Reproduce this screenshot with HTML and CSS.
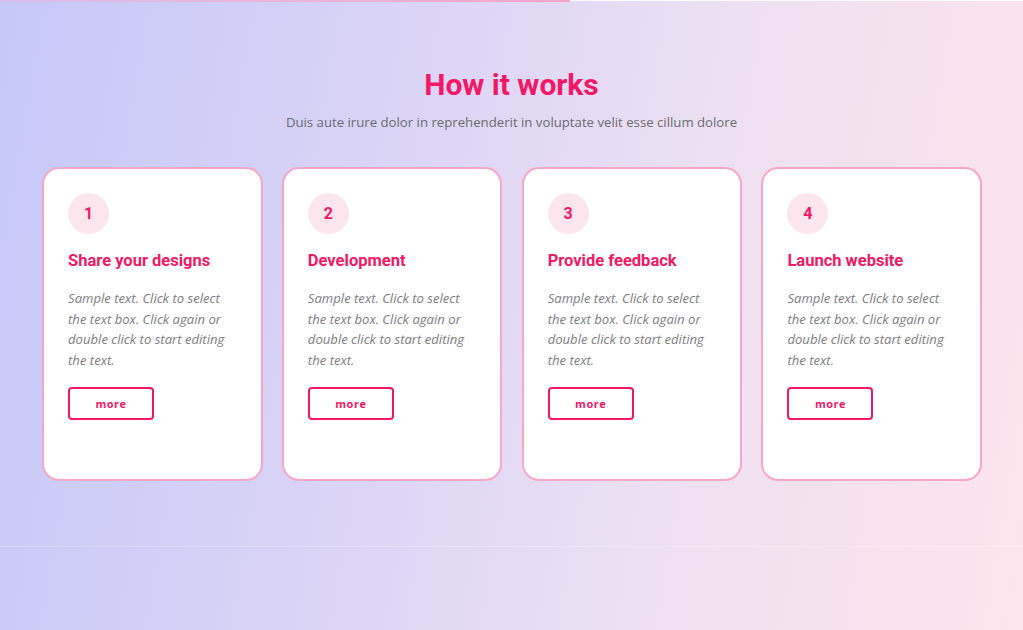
FILE: index.html
```html
<!DOCTYPE html>
<html>
<head>
<meta charset="utf-8">
<link rel="stylesheet" href="styles.css">
</head>
<body>
<div class="progress"><div class="progress-fill"></div></div>
<section class="steps">
  <h1 class="title">How it works</h1>
  <p class="subtitle">Duis aute irure dolor in reprehenderit in voluptate velit esse cillum dolore</p>
  <div class="cards">
    <div class="card">
      <div class="num">1</div>
      <h3 class="card-title">Share your designs</h3>
      <p class="card-text">Sample text. Click to select the text box. Click again or double click to start editing the text.</p>
      <a class="btn">more</a>
    </div>
    <div class="card">
      <div class="num">2</div>
      <h3 class="card-title">Development</h3>
      <p class="card-text">Sample text. Click to select the text box. Click again or double click to start editing the text.</p>
      <a class="btn">more</a>
    </div>
    <div class="card">
      <div class="num">3</div>
      <h3 class="card-title">Provide feedback</h3>
      <p class="card-text">Sample text. Click to select the text box. Click again or double click to start editing the text.</p>
      <a class="btn">more</a>
    </div>
    <div class="card">
      <div class="num">4</div>
      <h3 class="card-title">Launch website</h3>
      <p class="card-text">Sample text. Click to select the text box. Click again or double click to start editing the text.</p>
      <a class="btn">more</a>
    </div>
  </div>
</section>
</body>
</html>
```
FILE: styles.css
```css
html, body {
  margin: 0;
  padding: 0;
}
body {
  width: 1023px;
  height: 630px;
  overflow: hidden;
  background: linear-gradient(100deg, #c5c8f9 0%, #dcd5f5 40%, #ede0f2 65%, #fee4ec 100%);
  font-family: "Open Sans", sans-serif;
}
.progress {
  height: 2px;
  display: flex;
}
.progress-fill {
  width: 570px;
  height: 2px;
  background: linear-gradient(90deg, rgba(249,168,212,0.35), #f7a3c9);
}
.progress::after {
  content: "";
  flex: 1;
  height: 1px;
  background: rgba(255,255,255,0.9);
}
.steps {
  height: 545px;
  border-bottom: 1px solid rgba(255,255,255,0.25);
  display: flex;
  flex-direction: column;
  align-items: center;
  box-sizing: border-box;
  padding-top: 65px;
}
.title {
  margin: 0;
  font-family: Roboto, sans-serif;
  font-weight: 700;
  font-size: 30px;
  line-height: 36px;
  color: #f21865;
}
.subtitle {
  margin: 10px 0 0;
  font-size: 13.2px;
  line-height: 18px;
  color: #6b6b6f;
}
.cards {
  margin-top: 36px;
  display: flex;
  gap: 19.3px;
  padding-left: 1px;
}
.card {
  width: 220.5px;
  height: 314px;
  box-sizing: border-box;
  background: #fff;
  border: 2px solid #f8a6c6;
  border-radius: 17px;
  padding: 24px 24px;
}
.num {
  width: 41px;
  height: 41px;
  border-radius: 50%;
  background: #fde5ee;
  color: #f21865;
  font-family: Roboto, sans-serif;
  font-weight: 700;
  font-size: 16px;
  display: flex;
  align-items: center;
  justify-content: center;
}
.card-title {
  margin: 15px 0 0;
  font-family: Roboto, sans-serif;
  font-weight: 700;
  font-size: 16.5px;
  line-height: 24px;
  color: #f21865;
}
.card-text {
  margin: 15px 0 0;
  font-size: 13.1px;
  line-height: 20.7px;
  font-style: italic;
  color: #7c7c80;
}
.btn {
  margin-top: 16px;
  display: flex;
  align-items: center;
  justify-content: center;
  width: 86px;
  height: 33px;
  box-sizing: border-box;
  border: 2px solid #f21865;
  border-radius: 4px;
  color: #f21865;
  font-size: 11px;
  font-weight: 700;
  letter-spacing: 0.5px;
}
```
